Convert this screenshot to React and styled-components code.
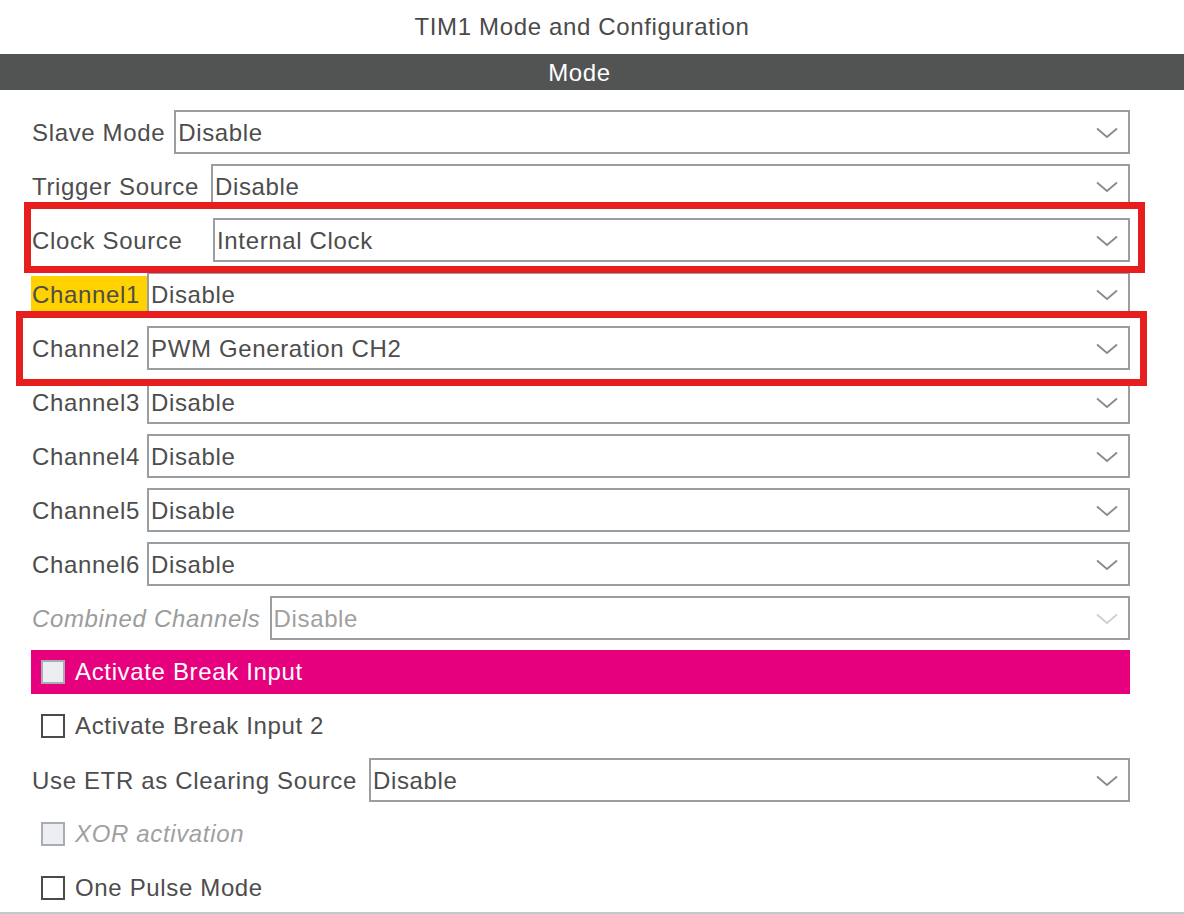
import React from 'react';
import styled, { createGlobalStyle, css } from 'styled-components';

const GlobalStyle = createGlobalStyle`
  html, body {
    margin: 0;
    padding: 0;
    background: #fff;
  }
  body {
    font-family: "Liberation Sans", Arial, sans-serif;
    color: #4d4d4d;
    letter-spacing: 0.65px;
  }
`;

const Page = styled.div`
  position: relative;
  width: 1184px;
  height: 914px;
  overflow: hidden;
  background: #fff;
`;

const Title = styled.div`
  height: 54px;
  line-height: 54px;
  font-size: 24px;
  text-align: center;
  color: #4a4a4a;
  padding-right: 20px;
`;

const SectionBar = styled.div`
  height: 36px;
  line-height: 37px;
  background: #525453;
  color: #fff;
  font-size: 24px;
  text-align: center;
  padding-right: 25px;
`;

const Body = styled.div`
  display: flex;
  flex-direction: column;
  padding: 15px 54px 0 31px;
  height: 807px;
  border-bottom: 2px solid #c2c9cd;
`;

const Row = styled.div`
  display: flex;
  align-items: center;
  height: 54px;
  flex: none;
`;

const Label = styled.span`
  flex: none;
  font-size: 24px;
  line-height: 36px;
  padding: 1px 9px 0 1px;
  height: 36px;
  box-sizing: border-box;
  color: #4d4d4d;
  white-space: nowrap;
  ${(p) => p.$width && css`width: ${p.$width}px;`}
  ${(p) => p.$highlight && css`background: #ffd200;`}
  ${(p) => p.$disabled && css`color: #9c9c9c; font-style: italic;`}
`;

const SelectBox = styled.div`
  flex: 1;
  display: flex;
  align-items: center;
  justify-content: space-between;
  height: 44px;
  box-sizing: border-box;
  border: 2px solid #999ea2;
  padding: 1px 10px 0 2px;
  font-size: 24px;
  color: ${(p) => (p.$disabled ? '#a0a0a0' : '#4d4d4d')};
  background: #fff;
`;

const CheckRow = styled.div`
  flex: none;
  display: flex;
  align-items: center;
  height: 44px;
  margin: 5px 0;
  padding-left: 10px;
  font-size: 24px;
  gap: 10px;
  ${(p) => p.$active && css`background: #e6007e; color: #fff;`}
  ${(p) => p.$disabled && css`color: #a0a0a0; font-style: italic;`}
`;

const Box = styled.span`
  flex: none;
  width: 24px;
  height: 24px;
  box-sizing: border-box;
  border: 2px solid ${(p) => (p.$muted ? '#a8adb1' : '#4a4a4a')};
  background: ${(p) => (p.$muted ? '#eceef1' : '#fff')};
`;

const Marker = styled.div`
  position: absolute;
  box-sizing: border-box;
  border: 7px solid #e61e1e;
  pointer-events: none;
`;

function Chevron({ light }) {
  return (
    <svg width="22" height="12" viewBox="0 0 22 12">
      <polyline
        points="1,1.5 11,10 21,1.5"
        fill="none"
        stroke={light ? '#cfcfcf' : '#8a8a8a'}
        strokeWidth="1.8"
      />
    </svg>
  );
}

function Select({ value, disabled }) {
  return (
    <SelectBox $disabled={disabled}>
      <span>{value}</span>
      <Chevron light={disabled} />
    </SelectBox>
  );
}

function Field({ label, value, width, highlight, disabled }) {
  return (
    <Row>
      <Label $width={width} $highlight={highlight} $disabled={disabled}>
        {label}
      </Label>
      <Select value={value} disabled={disabled} />
    </Row>
  );
}

function Check({ label, active, disabled }) {
  return (
    <CheckRow $active={active} $disabled={disabled}>
      <Box $muted={active || disabled} />
      <span>{label}</span>
    </CheckRow>
  );
}

export default function App() {
  return (
    <Page>
      <GlobalStyle />
      <Title>TIM1 Mode and Configuration</Title>
      <SectionBar>Mode</SectionBar>
      <Body>
        <Field label="Slave Mode" value="Disable" />
        <Field label="Trigger Source" value="Disable" width={180} />
        <Field label="Clock Source" value="Internal Clock" width={182} />
        <Field label="Channel1" value="Disable" width={116} highlight />
        <Field label="Channel2" value="PWM Generation CH2" width={116} />
        <Field label="Channel3" value="Disable" width={116} />
        <Field label="Channel4" value="Disable" width={116} />
        <Field label="Channel5" value="Disable" width={116} />
        <Field label="Channel6" value="Disable" width={116} />
        <Field label="Combined Channels" value="Disable" disabled />
        <Check label="Activate Break Input" active />
        <Check label="Activate Break Input 2" />
        <Field label="Use ETR as Clearing Source" value="Disable" width={338} />
        <Check label="XOR activation" disabled />
        <Check label="One Pulse Mode" />
      </Body>
      <Marker style={{ left: 24, top: 202, width: 1121, height: 71 }} />
      <Marker style={{ left: 16, top: 311, width: 1131, height: 75 }} />
    </Page>
  );
}
